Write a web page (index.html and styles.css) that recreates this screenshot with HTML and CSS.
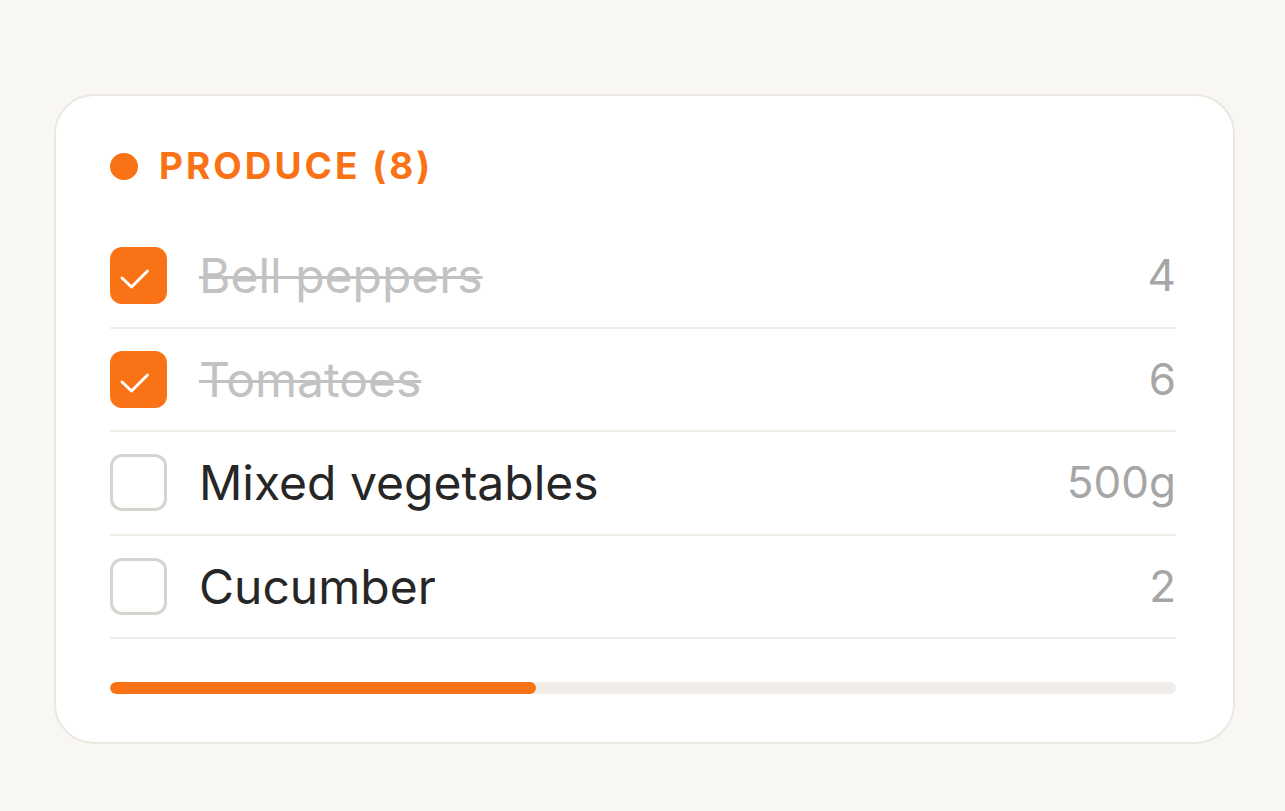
FILE: index.html
```html
<!DOCTYPE html>
<html>
<head>
<meta charset="utf-8">
<link rel="stylesheet" href="styles.css">
</head>
<body>
<div class="card">
  <div class="header">
    <span class="dot"></span>
    <span class="title">PRODUCE (8)</span>
  </div>
  <ul class="list">
    <li class="row done">
      <span class="box checked"><svg viewBox="0 0 57 57" width="57" height="57"><polyline points="12,31 21.5,40 37.5,24" fill="none" stroke="#fff" stroke-width="3" stroke-linecap="round" stroke-linejoin="round"/></svg></span>
      <span class="name">Bell peppers</span>
      <span class="qty">4</span>
    </li>
    <li class="row done">
      <span class="box checked"><svg viewBox="0 0 57 57" width="57" height="57"><polyline points="12,31 21.5,40 37.5,24" fill="none" stroke="#fff" stroke-width="3" stroke-linecap="round" stroke-linejoin="round"/></svg></span>
      <span class="name">Tomatoes</span>
      <span class="qty">6</span>
    </li>
    <li class="row">
      <span class="box"></span>
      <span class="name">Mixed vegetables</span>
      <span class="qty">500g</span>
    </li>
    <li class="row">
      <span class="box"></span>
      <span class="name">Cucumber</span>
      <span class="qty">2</span>
    </li>
  </ul>
  <div class="track"><div class="fill" style="width:40%"></div></div>
</div>
</body>
</html>
```
FILE: styles.css
```css
html, body {
  margin: 0;
  padding: 0;
  background: #f9f7f3;
  font-family: Inter, "Noto Sans", sans-serif;
}
body {
  padding: 94px 50px 0 54px;
}
.card {
  box-sizing: border-box;
  width: 1181px;
  height: 650px;
  background: #ffffff;
  border: 2px solid #ebe8e1;
  border-radius: 40px;
  padding: 54px 57px 0 54px;
}
.header {
  display: flex;
  align-items: center;
  height: 32px;
  margin-bottom: 43px;
}
.dot {
  width: 28px;
  height: 27px;
  border-radius: 50%;
  background: #f97316;
  margin-right: 21px;
}
.title {
  color: #f97316;
  font-weight: 700;
  font-size: 37px;
  letter-spacing: 3px;
  line-height: 32px;
}
.list {
  list-style: none;
  margin: 0;
  padding: 0;
}
.row {
  display: flex;
  align-items: center;
  padding: 22px 0 22.5px;
  border-bottom: 2px solid #f1eee8;
}
.box {
  box-sizing: border-box;
  width: 57px;
  height: 57px;
  border-radius: 12px;
  border: 3px solid #d7d4cf;
  flex: none;
  margin-right: 32px;
  position: relative;
}
.box.checked {
  border: none;
  background: #f97316;
}
.box svg {
  display: block;
}
.name {
  flex: 1;
  font-size: 48px;
  color: #262626;
  line-height: 57px;
}
.done .name {
  color: #c2c2c2;
  text-decoration: line-through;
  text-decoration-thickness: 3px;
}
.qty {
  font-size: 44px;
  color: #a6a6a6;
  line-height: 57px;
}
.track {
  margin-top: 43px;
  height: 12px;
  border-radius: 6px;
  background: #f0ede8;
  overflow: hidden;
}
.fill {
  height: 100%;
  background: #f97316;
  border-radius: 6px;
}
```
